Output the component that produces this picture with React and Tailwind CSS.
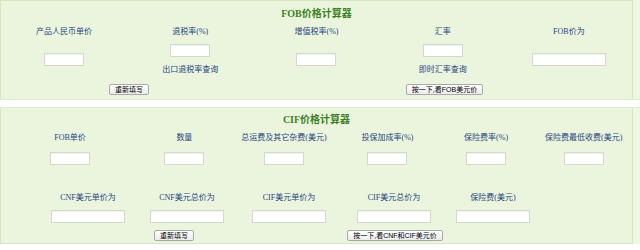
import React from "react";

const font = { fontFamily: '"Liberation Serif", "Noto Sans CJK SC", serif' };
const sans = { fontFamily: '"Liberation Sans", "Noto Sans CJK SC", sans-serif' };

function Label({ children }) {
  return <span className="text-[8px] leading-none text-[#26457f] whitespace-nowrap">{children}</span>;
}

function Field({ wide }) {
  return (
    <input
      type="text"
      className={`${wide ? "w-[74px]" : "w-[40px]"} h-[13px] bg-white border border-[#d3d9cc] shadow-[inset_0_1px_1px_rgba(0,0,0,0.06)] outline-none`}
    />
  );
}

function Btn({ children }) {
  return (
    <button
      className="h-[11px] px-[5px] flex items-center text-[7px] leading-none text-black bg-gradient-to-b from-white to-[#ececec] border border-[#a9a9a9] rounded-[2px] whitespace-nowrap"
      style={sans}
    >
      {children}
    </button>
  );
}

export default function App() {
  return (
    <div className="w-[640px] h-[250px] bg-[#eef7e4] overflow-hidden" style={font}>
      {/* FOB calculator */}
      <div className="h-[99px] w-[633px] bg-[#ebf5dd] border-t border-l border-r border-[#d4e7bf]">
        <div className="h-[24px] flex items-center justify-center">
          <span className="text-[10px] font-bold text-[#3c7f27]">FOB价格计算器</span>
        </div>
        <div className="grid grid-cols-5 h-[14px] items-center justify-items-center">
          <Label>产品人民币单价</Label>
          <Label>退税率(%)</Label>
          <Label>增值税率(%)</Label>
          <Label>汇率</Label>
          <Label>FOB价为</Label>
        </div>
        <div className="grid grid-cols-5 h-[40px] items-center justify-items-center">
          <Field />
          <div className="flex flex-col items-center gap-[9px]">
            <Field />
            <Label>出口退税率查询</Label>
          </div>
          <Field />
          <div className="flex flex-col items-center gap-[9px]">
            <Field />
            <Label>即时汇率查询</Label>
          </div>
          <Field wide />
        </div>
        <div className="flex h-[20px] items-center">
          <div className="w-[256px] flex justify-center">
            <Btn>重新填写</Btn>
          </div>
          <div className="flex-1 flex justify-center">
            <Btn>按一下,看FOB美元价</Btn>
          </div>
        </div>
      </div>

      <div className="h-[9px] bg-white border-y border-[#e3eed6]" />

      {/* CIF calculator */}
      <div className="h-[136px] w-[633px] bg-[#ebf5dd] border-l border-r border-b border-[#d4e7bf]">
        <div className="h-[22px] flex items-center justify-center">
          <span className="text-[10px] font-bold text-[#3c7f27]">CIF价格计算器</span>
        </div>
        <div className="flex h-[16px] items-center">
          <div className="w-[140px] flex justify-center"><Label>FOB单价</Label></div>
          <div className="w-[92px] flex justify-center"><Label>数量</Label></div>
          <div className="w-[110px] flex justify-center"><Label>总运费及其它杂费(美元)</Label></div>
          <div className="w-[100px] flex justify-center"><Label>投保加成率(%)</Label></div>
          <div className="w-[100px] flex justify-center"><Label>保险费率(%)</Label></div>
          <div className="w-[98px] flex justify-center"><Label>保险费最低收费(美元)</Label></div>
        </div>
        <div className="flex h-[24px] items-center">
          <div className="w-[140px] flex justify-center"><Field /></div>
          <div className="w-[92px] flex justify-center"><Field /></div>
          <div className="w-[110px] flex justify-center"><Field /></div>
          <div className="w-[100px] flex justify-center"><Field /></div>
          <div className="w-[100px] flex justify-center"><Field /></div>
          <div className="w-[98px] flex justify-center"><Field /></div>
        </div>
        <div className="h-[20px]" />
        <div className="flex h-[16px] items-center pl-[40px]">
          <div className="w-[94px] flex justify-center"><Label>CNF美元单价为</Label></div>
          <div className="w-[104px] flex justify-center"><Label>CNF美元总价为</Label></div>
          <div className="w-[100px] flex justify-center"><Label>CIF美元单价为</Label></div>
          <div className="w-[110px] flex justify-center"><Label>CIF美元总价为</Label></div>
          <div className="w-[88px] flex justify-center"><Label>保险费(美元)</Label></div>
        </div>
        <div className="flex h-[21px] items-center pl-[40px]">
          <div className="w-[94px] flex justify-center"><Field wide /></div>
          <div className="w-[104px] flex justify-center"><Field wide /></div>
          <div className="w-[100px] flex justify-center"><Field wide /></div>
          <div className="w-[110px] flex justify-center"><Field wide /></div>
          <div className="w-[88px] flex justify-center"><Field wide /></div>
        </div>
        <div className="flex h-[16px] items-center pl-[40px]">
          <div className="w-[266px] flex justify-center">
            <Btn>重新填写</Btn>
          </div>
          <div className="w-[176px] flex justify-center">
            <Btn>按一下,看CNF和CIF美元价</Btn>
          </div>
        </div>
      </div>
      <div className="h-[6px] bg-white" />
    </div>
  );
}
